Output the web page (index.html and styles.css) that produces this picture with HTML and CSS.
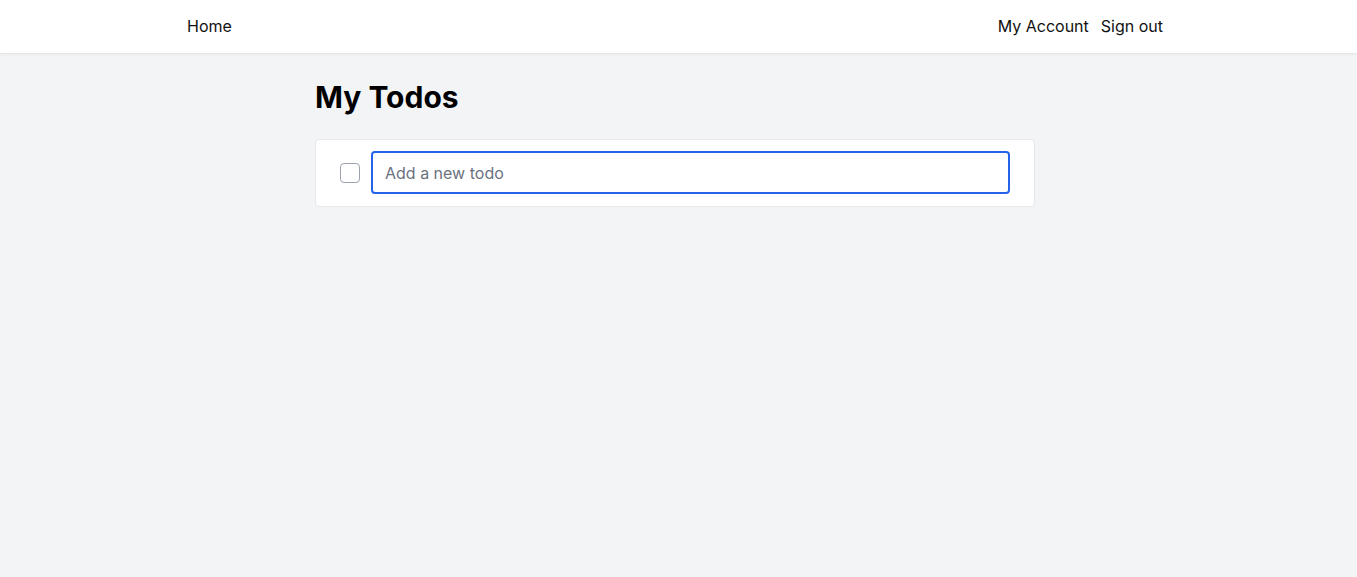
FILE: index.html
```html
<!DOCTYPE html>
<html lang="en">
<head>
  <meta charset="UTF-8" />
  <title>My Todos</title>
  <meta name="viewport" content="width=device-width, initial-scale=1.0" />
  <link rel="stylesheet" href="styles.css">
</head>
<body>

<header class="topbar">
  <nav class="topbar-inner">
    <a href="#" class="nav-link">Home</a>
    <div class="nav-right">
      <a href="#" class="nav-link">My Account</a>
      <a href="#" class="nav-link">Sign out</a>
    </div>
  </nav>
</header>

<main class="page">
  <h1>My Todos</h1>

  <div class="todo-card">
    <input type="checkbox" class="todo-check" />
    <input type="text" class="todo-input" placeholder="Add a new todo" />
  </div>
</main>

</body>
</html>
```

FILE: styles.css
```css
* {
  box-sizing: border-box;
}

body {
  font-family: Inter, "Noto Sans", sans-serif;
  background: #f3f4f6;
  color: #111;
  margin: 0;
  padding: 0 7px 0 0;
}

/* Шапка */
.topbar {
  background: white;
  border-bottom: 1px solid #e5e7eb;
  box-shadow: 0 1px 2px rgba(0,0,0,0.04);
  margin-right: -7px;
  padding-right: 7px;
}

.topbar-inner {
  max-width: 976px;
  margin: 0 auto;
  height: 53px;
  padding-bottom: 2px;
  display: flex;
  align-items: center;
  justify-content: space-between;
}

.nav-right {
  display: flex;
  gap: 12px;
  padding-left: 2px;
}

.nav-link {
  color: #111;
  text-decoration: none;
  font-size: 16px;
}

/* Контент */
.page {
  max-width: 720px;
  margin: 0 auto;
  padding-top: 25px;
}

h1 {
  font-size: 30px;
  line-height: 36px;
  font-weight: 700;
  margin: 0 0 24px;
  color: #000;
}

.todo-card {
  background: white;
  border: 1px solid #e5e7eb;
  border-radius: 4px;
  padding: 11px 24px 12px;
  display: flex;
  align-items: center;
  gap: 11px;
}

.todo-check {
  appearance: none;
  width: 20px;
  height: 20px;
  margin: 0;
  border: 1px solid #9ca3af;
  border-radius: 4px;
  background: white;
  flex-shrink: 0;
}

.todo-input {
  flex-grow: 1;
  height: 43px;
  border: 2px solid #2563eb;
  border-radius: 4px;
  padding: 0 12px;
  font-family: inherit;
  font-size: 16px;
  outline: none;
}

.todo-input::placeholder {
  color: #6b7280;
}
```
